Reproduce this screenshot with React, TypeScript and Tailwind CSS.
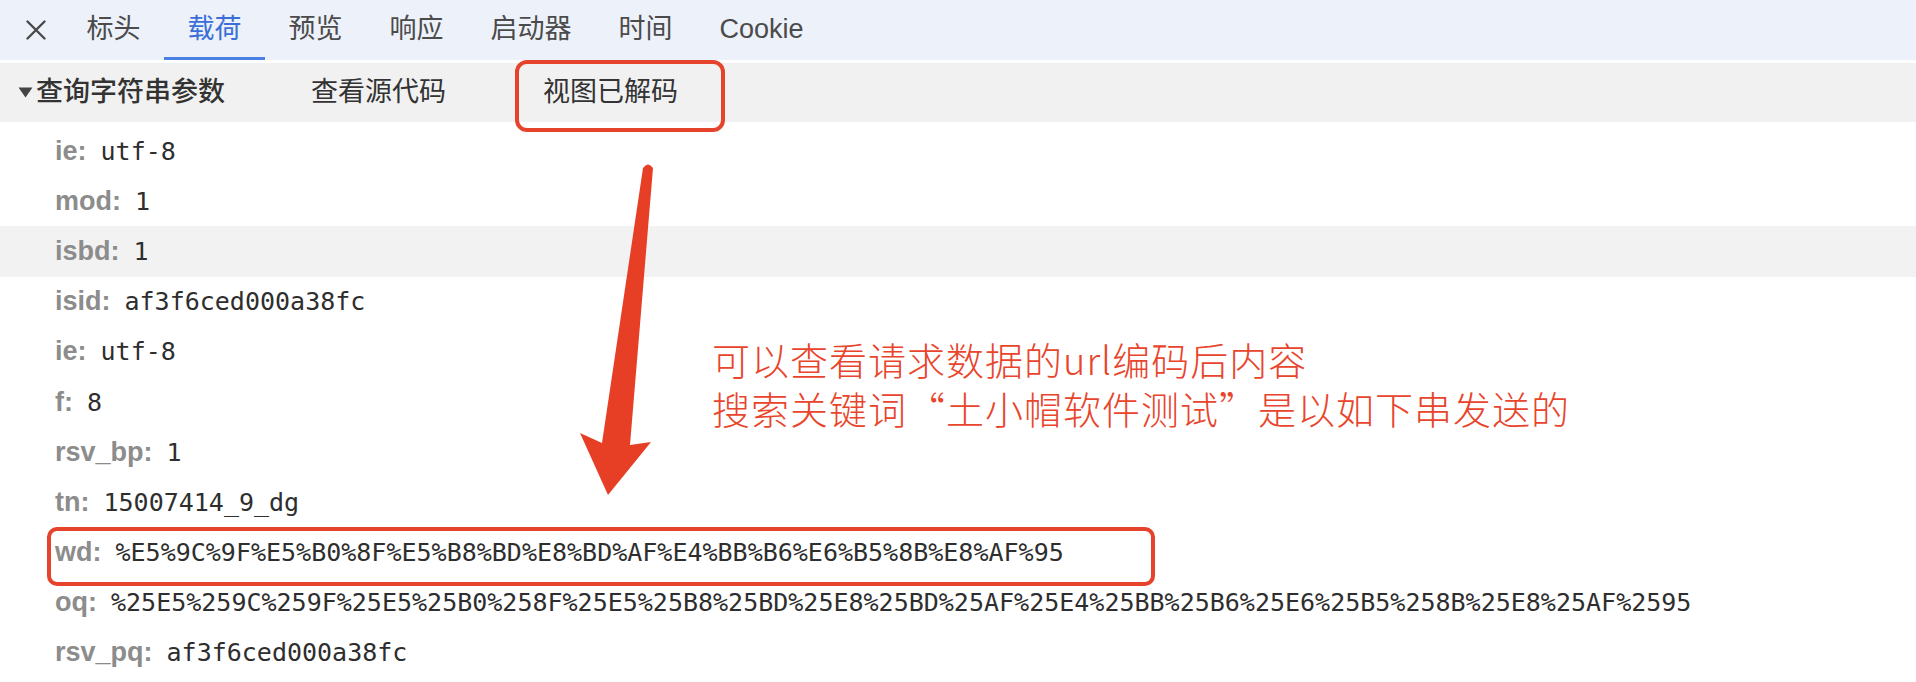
import React from "react";

const tabs = ["标头", "载荷", "预览", "响应", "启动器", "时间", "Cookie"];

const params: { key: string; value: string }[] = [
  { key: "ie", value: "utf-8" },
  { key: "mod", value: "1" },
  { key: "isbd", value: "1" },
  { key: "isid", value: "af3f6ced000a38fc" },
  { key: "ie", value: "utf-8" },
  { key: "f", value: "8" },
  { key: "rsv_bp", value: "1" },
  { key: "tn", value: "15007414_9_dg" },
  { key: "wd", value: "%E5%9C%9F%E5%B0%8F%E5%B8%BD%E8%BD%AF%E4%BB%B6%E6%B5%8B%E8%AF%95" },
  {
    key: "oq",
    value:
      "%25E5%259C%259F%25E5%25B0%258F%25E5%25B8%25BD%25E8%25BD%25AF%25E4%25BB%25B6%25E6%25B5%258B%25E8%25AF%2595",
  },
  { key: "rsv_pq", value: "af3f6ced000a38fc" },
];

function TabBar() {
  return (
    <div className="flex h-[60px] items-stretch bg-[#edf1f9]">
      <div className="flex items-center pl-[26px] pr-[17px]">
        <svg width="20" height="20" viewBox="0 0 20 20" className="text-[#4a4a4a]">
          <path d="M1.5 1.5 L18.5 18.5 M18.5 1.5 L1.5 18.5" stroke="currentColor" strokeWidth="2.4" strokeLinecap="round" />
        </svg>
      </div>
      {tabs.map((t) => {
        const active = t === "载荷";
        return (
          <div
            key={t}
            className={`flex items-center border-b-[3px] px-[23.5px] pt-[1px] text-[27px] leading-none ${
              active ? "border-[#4a7fe4] text-[#3a6fd8]" : "border-transparent text-[#4b4b4b]"
            }`}
          >
            {t}
          </div>
        );
      })}
    </div>
  );
}

function Toolbar() {
  return (
    <div className="mt-[3px] flex h-[59px] items-center bg-[#f1f1f1] text-[27px] leading-none text-[#333]">
      <svg width="15" height="11" viewBox="0 0 15 11" className="ml-[18px] mr-[3px] text-[#444]">
        <path d="M0.5 0.5 H14.5 L7.5 10.5 Z" fill="currentColor" />
      </svg>
      <span className="font-medium">查询字符串参数</span>
      <span className="ml-[86px]">查看源代码</span>
      <span className="ml-[97px]">视图已解码</span>
    </div>
  );
}

function ParamRow({ k, v, hover }: { k: string; v: string; hover: boolean }) {
  return (
    <div className={`flex h-[50.2px] items-center whitespace-nowrap pl-[55px] ${hover ? "bg-[#f2f2f2]" : ""}`}>
      <span className="text-[27px] font-bold leading-none text-[#8c8c8c]">{k}:</span>
      <span className="ml-[14px] font-['DejaVu_Sans_Mono',monospace] text-[25px] leading-none text-[#2e2e2e]">{v}</span>
    </div>
  );
}

export default function App() {
  return (
    <div className="relative h-[682px] w-full overflow-hidden bg-white font-['Liberation_Sans','Noto_Sans_CJK_SC',sans-serif]">
      <TabBar />
      <Toolbar />
      <div className="pt-[4px]">
        {params.map((p, i) => (
          <ParamRow key={i} k={p.key} v={p.value} hover={i === 2} />
        ))}
      </div>

      {/* annotations */}
      <div className="absolute left-[515px] top-[60px] h-[72px] w-[210px] rounded-[12px] border-[4px] border-[#e5432b]" />
      <div className="absolute left-[47px] top-[527px] h-[59px] w-[1108px] rounded-[10px] border-[4px] border-[#e5432b]" />
      <svg className="absolute left-[560px] top-[150px]" width="110" height="360" viewBox="0 0 110 360">
        <path
          d="M83 18 Q88 11 93 18 L70 295 L91 292 L48 345 L20 283 L42 293 Z"
          fill="#e73f26"
        />
      </svg>
      <div className="absolute left-[712px] top-[334px] font-['Noto_Sans_CJK_SC',sans-serif] text-[38px] font-light leading-[49px] tracking-[1px] text-[#e8452c]">
        <div>可以查看请求数据的url编码后内容</div>
        <div>搜索关键词“土小帽软件测试”是以如下串发送的</div>
      </div>
    </div>
  );
}
